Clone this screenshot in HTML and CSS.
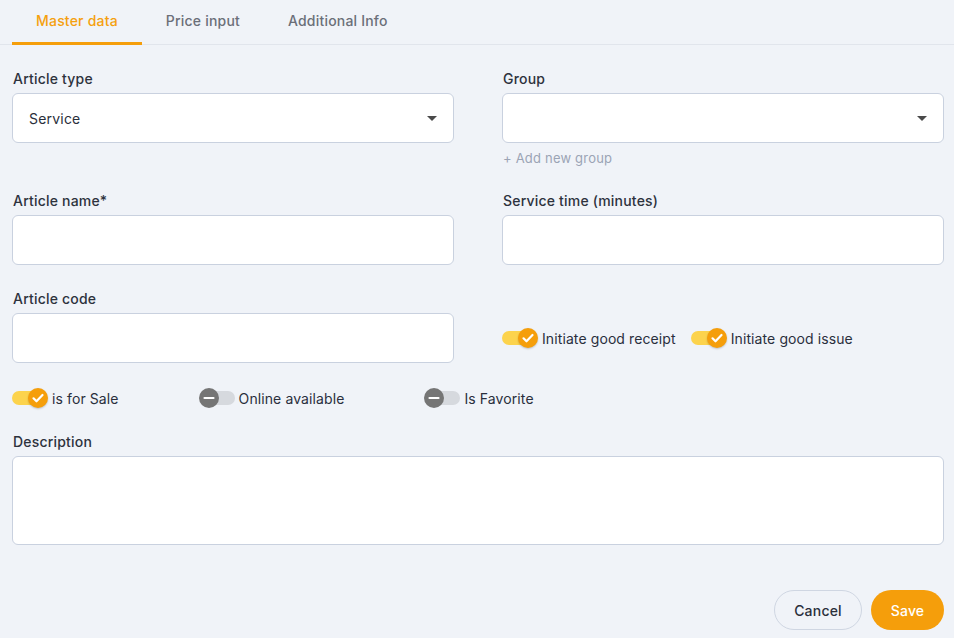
FILE: index.html
```html
<!DOCTYPE html>
<html lang="en">
<head>
<meta charset="utf-8">
<title>Article</title>
<link rel="stylesheet" href="styles.css">
</head>
<body>
<nav class="tabs">
  <div class="tab active">Master data</div>
  <div class="tab">Price input</div>
  <div class="tab">Additional Info</div>
</nav>
<main class="form">
  <div class="grid">
    <div class="field">
      <label class="label">Article type</label>
      <div class="input select"><span>Service</span><span class="caret"></span></div>
    </div>
    <div class="field">
      <label class="label">Group</label>
      <div class="input select"><span></span><span class="caret"></span></div>
      <div class="add-link">+ Add new group</div>
    </div>
    <div class="field">
      <label class="label">Article name*</label>
      <div class="input"></div>
    </div>
    <div class="field">
      <label class="label">Service time (minutes)</label>
      <div class="input"></div>
    </div>
    <div class="field">
      <label class="label">Article code</label>
      <div class="input"></div>
    </div>
    <div class="field toggles-right">
      <div class="toggle-group">
        <div class="toggle on"><span class="track"></span><span class="knob"><svg viewBox="0 0 20 20" width="20" height="20"><path d="M5.5 10.3l3 3 6-6.3" fill="none" stroke="#fff" stroke-width="2.2" stroke-linecap="round" stroke-linejoin="round"/></svg></span></div>
        <span class="toggle-text">Initiate good receipt</span>
      </div>
      <div class="toggle-group">
        <div class="toggle on"><span class="track"></span><span class="knob"><svg viewBox="0 0 20 20" width="20" height="20"><path d="M5.5 10.3l3 3 6-6.3" fill="none" stroke="#fff" stroke-width="2.2" stroke-linecap="round" stroke-linejoin="round"/></svg></span></div>
        <span class="toggle-text">Initiate good issue</span>
      </div>
    </div>
  </div>
  <div class="toggle-row">
    <div class="toggle-group">
      <div class="toggle on"><span class="track"></span><span class="knob"><svg viewBox="0 0 20 20" width="20" height="20"><path d="M5.5 10.3l3 3 6-6.3" fill="none" stroke="#fff" stroke-width="2.2" stroke-linecap="round" stroke-linejoin="round"/></svg></span></div>
      <span class="toggle-text">is for Sale</span>
    </div>
    <div class="toggle-group">
      <div class="toggle off"><span class="track"></span><span class="knob"><svg viewBox="0 0 20 20" width="20" height="20"><path d="M5.5 10h9" fill="none" stroke="#fff" stroke-width="2.2" stroke-linecap="round"/></svg></span></div>
      <span class="toggle-text">Online available</span>
    </div>
    <div class="toggle-group">
      <div class="toggle off"><span class="track"></span><span class="knob"><svg viewBox="0 0 20 20" width="20" height="20"><path d="M5.5 10h9" fill="none" stroke="#fff" stroke-width="2.2" stroke-linecap="round"/></svg></span></div>
      <span class="toggle-text">Is Favorite</span>
    </div>
  </div>
  <div class="field">
    <label class="label">Description</label>
    <div class="input textarea"></div>
  </div>
  <div class="actions">
    <button class="btn cancel">Cancel</button>
    <button class="btn save">Save</button>
  </div>
</main>
</body>
</html>
```

FILE: styles.css
```css
* { box-sizing: border-box; }
html, body { margin: 0; padding: 0; }
body {
  background: #f0f3f8;
  font-family: Inter, "Noto Sans", sans-serif;
  color: #2a2f3b;
  letter-spacing: 0.2px;
  width: 954px;
  height: 638px;
  overflow: hidden;
}
.tabs {
  display: flex;
  padding: 0 12px;
  border-bottom: 1px solid #e1e5ec;
  height: 45px;
}
.tab {
  padding: 0 24px;
  font-size: 14px;
  font-weight: 500;
  color: #6b6f78;
  line-height: 42px;
  height: 45px;
  border-bottom: 3px solid transparent;
}
.tab.active {
  color: #f5a00f;
  border-bottom-color: #f59e0b;
}
.form {
  padding: 25px 10px 0 12px;
  display: flex;
  flex-direction: column;
  gap: 25px;
}
.grid {
  display: grid;
  grid-template-columns: 442px 442px;
  column-gap: 48px;
  row-gap: 25px;
}
.field {
  display: flex;
  flex-direction: column;
}
.label {
  font-size: 14px;
  font-weight: 500;
  line-height: 17px;
  color: #2d323d;
  margin-bottom: 6px;
  padding-left: 1px;
}
.input {
  height: 50px;
  background: #fff;
  border: 1px solid #c9d1df;
  border-radius: 6px;
  display: flex;
  align-items: center;
  padding: 0 16px;
  font-size: 14px;
  color: #2a2f3b;
}
.select { justify-content: space-between; }
.caret {
  width: 0;
  height: 0;
  border-left: 5px solid transparent;
  border-right: 5px solid transparent;
  border-top: 5px solid #4a4a4a;
}
.textarea { height: 89px; }
.add-link {
  margin-top: 6px;
  padding-left: 1px;
  font-size: 13px;
  line-height: 18px;
  color: #9ba4b5;
}
.toggles-right {
  flex-direction: row;
  align-items: center;
  align-self: end;
  height: 50px;
  gap: 15px;
}
.toggle-group {
  display: flex;
  align-items: center;
  gap: 4px;
}
.toggle {
  position: relative;
  width: 36px;
  height: 20px;
}
.track {
  position: absolute;
  left: 0;
  top: 3px;
  width: 34px;
  height: 14px;
  border-radius: 7px;
  background: #fcd34d;
}
.knob {
  position: absolute;
  top: 0;
  width: 20px;
  height: 20px;
  border-radius: 50%;
  display: block;
}
.knob svg { display: block; }
.toggle.on .knob {
  left: 16px;
  background: #f59e0b;
  box-shadow: 0 1px 2px rgba(0,0,0,0.2);
}
.toggle.off .track {
  left: 2px;
  background: #d6d9de;
}
.toggle.off .knob {
  left: 0;
  background: #757575;
}
.toggle-text {
  font-size: 14px;
  color: #2a2f3d;
  letter-spacing: 0.1px;
}
.toggle-row {
  display: flex;
  align-items: center;
  gap: 80px;
  height: 20px;
}
.actions {
  display: flex;
  justify-content: flex-end;
  gap: 9px;
  margin-top: 20px;
}
.btn {
  height: 40px;
  border-radius: 20px;
  font-family: Inter, "Noto Sans", sans-serif;
  font-size: 14px;
  font-weight: 500;
  letter-spacing: 0.2px;
}
.cancel {
  width: 88px;
  background: #f0f3f8;
  border: 1px solid #cfd6e2;
  color: #2a2f3b;
}
.save {
  width: 73px;
  background: #f59e0b;
  border: none;
  color: #fff;
}
```
